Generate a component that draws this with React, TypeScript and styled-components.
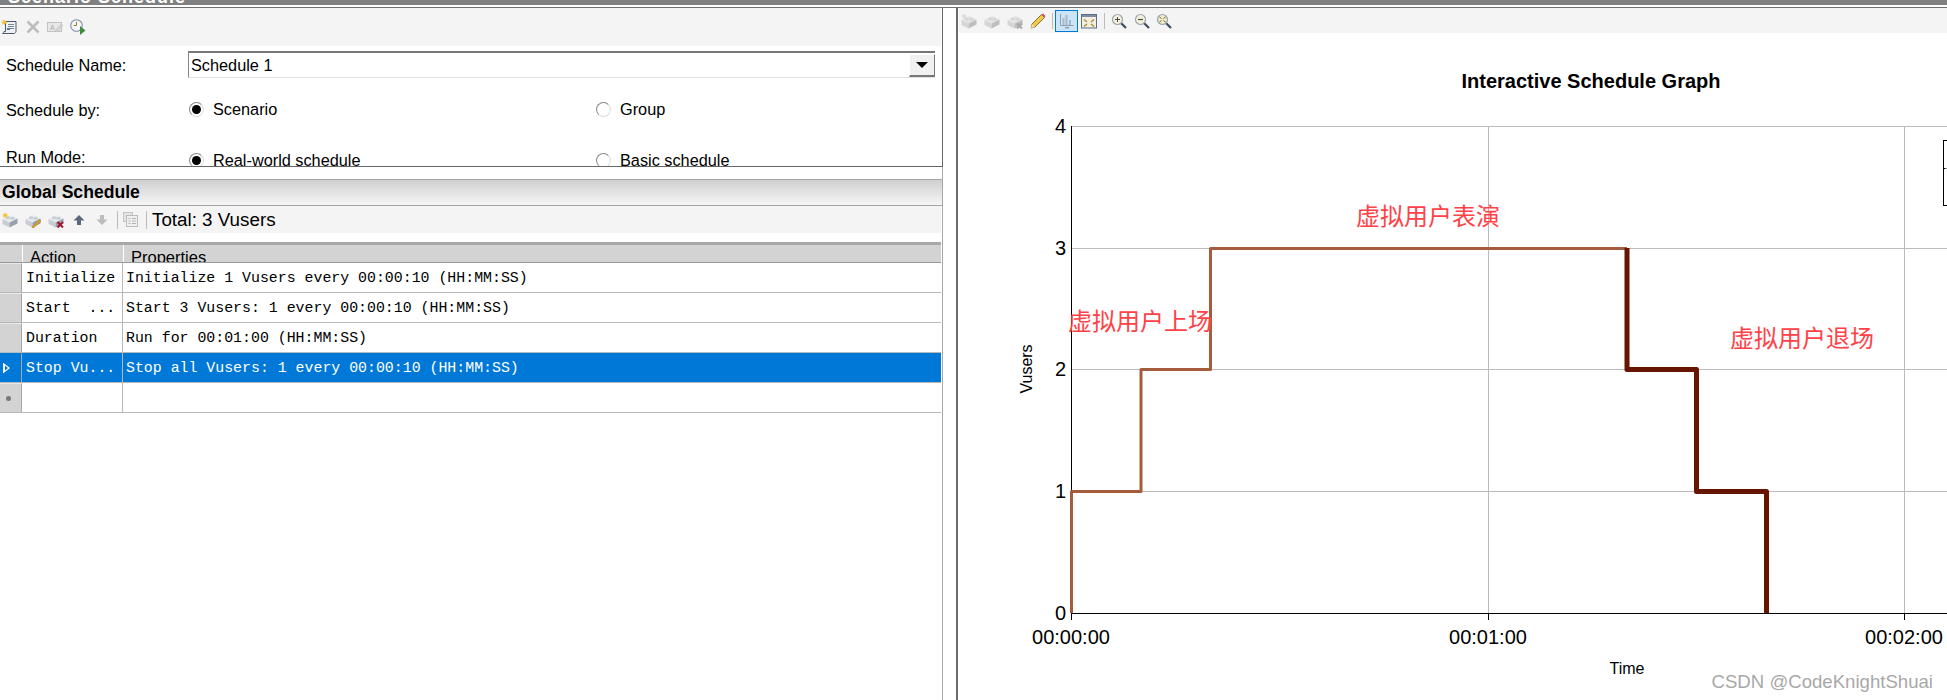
import React from 'react';
import styled, { createGlobalStyle } from 'styled-components';

const GlobalStyle = createGlobalStyle`
  html, body {
    margin: 0;
    padding: 0;
    background: #fff;
    overflow: hidden;
  }
`;

const rows = [
  { action: 'Initialize', props: 'Initialize 1 Vusers every 00:00:10 (HH:MM:SS)' },
  { action: 'Start  ...', props: 'Start 3 Vusers: 1 every 00:00:10 (HH:MM:SS)' },
  { action: 'Duration', props: 'Run for 00:01:00 (HH:MM:SS)' },
  { action: 'Stop Vu...', props: 'Stop all Vusers: 1 every 00:00:10 (HH:MM:SS)', selected: true },
];

const Star = ({ color = '#f2c230' }: { color?: string }) => (
  <path d="M3 0l.8 2 2-.6-1 1.7 1.5 1.3-2.1.1-.3 2-1.2-1.7-1.8.8.6-1.9L0 2.5l2.1-.1z" fill={color} />
);

function Brick({ star, muted, mark }: { star?: boolean; muted?: boolean; mark?: 'pencil' | 'cross' | 'greyCross' }) {
  const top = muted ? '#e4e4e4' : '#e6eaee';
  const left = muted ? '#d6d6d6' : '#c8ced4';
  const right = muted ? '#bebebe' : '#98a2ac';
  return (
    <svg width="16" height="16" viewBox="0 0 16 16">
      <path d="M0.5 7 L8.5 3 L15.5 6.5 L7.5 10.5z" fill={top} />
      <path d="M0.5 7 L7.5 10.5 V15.5 L0.5 12z" fill={left} />
      <path d="M15.5 6.5 L7.5 10.5 V15.5 L15.5 11.5z" fill={right} />
      <ellipse cx="6" cy="5.8" rx="2.2" ry="1.5" fill={left} />
      <ellipse cx="10.6" cy="6.2" rx="2.2" ry="1.5" fill={left} />
      {star && <Star color={muted ? '#dcdcdc' : '#f2c230'} />}
      {mark === 'pencil' && <path d="M15 7.5 L8 14 L7 16 L9.2 15.4 L16 9z" fill="#e8a820" stroke="#8a6a10" strokeWidth=".4" />}
      {mark === 'cross' && <path d="M9.5 10 L15 15.5 M15 10 L9.5 15.5" stroke="#a01830" strokeWidth="2" />}
      {mark === 'greyCross' && <path d="M10 10.5 L15 15.5 M15 10.5 L10 15.5" stroke="#a8a8a8" strokeWidth="2" />}
    </svg>
  );
}

const ScrollIcon = () => (
  <svg width="16" height="16" viewBox="0 0 16 16">
    <path d="M4.5 2.5 H15 V12 C15 13 14.5 14 13.5 14.5 H1.5 C2.5 14 3 13.5 3 12.5 H4.5z" fill="#eef1f4" stroke="#4a5a6c" />
    <path d="M7 5.5h6M7 7.5h6M7 9.5h6" stroke="#7b8a99" />
    <path d="M6 11 h3 v-2 h-3z" fill="#5c7590" />
    <Star />
  </svg>
);

const CrossIcon = () => (
  <svg width="14" height="14" viewBox="0 0 14 14">
    <path d="M1.5 1.5 L12.5 12.5 M12.5 1.5 L1.5 12.5" stroke="#bdbdbd" strokeWidth="2.6" />
  </svg>
);

const RenameIcon = () => (
  <svg width="16" height="16" viewBox="0 0 16 16">
    <rect x="0.5" y="3.5" width="14" height="9" fill="#e8e8e8" stroke="#c2c2c2" />
    <text x="3" y="11" fontFamily="Liberation Sans, sans-serif" fontSize="7" fill="#a8a8a8">A</text>
    <path d="M8 12 L14 5 L16 6.5 L10 13z" fill="#d4d4d4" stroke="#bbb" strokeWidth=".5" />
  </svg>
);

const ClockIcon = () => (
  <svg width="16" height="16" viewBox="0 0 16 16">
    <circle cx="6.5" cy="6.5" r="5.8" fill="#f2f6fa" stroke="#7c8ea0" strokeWidth="1.1" />
    <path d="M6.5 2.8 V6.5 H3.6" fill="none" stroke="#a87a20" strokeWidth="1" />
    <path d="M10 7 L15.5 11.5 L10 16z" fill="#3f8c3a" />
  </svg>
);

const ArrowIcon = ({ down, color }: { down?: boolean; color: string }) => (
  <svg width="12" height="12" viewBox="0 0 12 12">
    <path d={down ? 'M4 1 H8 V5.5 H11.5 L6 11 L.5 5.5 H4z' : 'M6 1 L11.5 6.5 H8 V11 H4 V6.5 H.5z'} fill={color} />
  </svg>
);

const SheetIcon = () => (
  <svg width="15" height="15" viewBox="0 0 15 15">
    <rect x="0.5" y="0.5" width="9" height="9" fill="#e4e4e4" stroke="#c4c4c4" />
    <rect x="3.5" y="3.5" width="11" height="11" fill="#f0f0f0" stroke="#bbb" />
    <path d="M5.5 6.5h2M5.5 9h2M5.5 11.5h2M9 6.5h4M9 9h4M9 11.5h4" stroke="#b4b4b4" />
  </svg>
);

const PencilIcon = () => (
  <svg width="16" height="16" viewBox="0 0 16 16">
    <path d="M1 15 L2 11 L11.5 1.5 L14.5 4.5 L5 14z" fill="#f0c848" stroke="#6a5a28" strokeWidth=".8" />
    <path d="M11.5 1.5 L13 0.5 L15.5 3 L14.5 4.5z" fill="#d0506a" />
    <path d="M1 15 L2 11 L5 14z" fill="#f4e0b0" />
  </svg>
);

const GraphIcon = () => (
  <svg width="16" height="16" viewBox="0 0 16 16">
    <path d="M1.5 1 V12.5 H14.5" fill="none" stroke="#8ea0ae" />
    <path d="M3.5 5h2v7h-2zM6.5 2h2v10h-2zM10 7h2v5h-2z" fill="#a7b8c6" />
    <path d="M6 14h4v1.5H6z" fill="#8ea0ae" />
  </svg>
);

const FitIcon = () => (
  <svg width="16" height="16" viewBox="0 0 16 16">
    <rect x="0.5" y="1.5" width="15" height="13.5" fill="#f2efe2" stroke="#5a6f86" />
    <rect x="1" y="2" width="14" height="2" fill="#7b8fa5" />
    <path d="M3 6.5 L6 9M13 6.5 L10 9M3 13.5 L6 11M13 13.5 L10 11" stroke="#a88c30" strokeWidth="1.4" />
  </svg>
);

const LensIcon = ({ kind }: { kind: 'plus' | 'minus' | 'fit' }) => (
  <svg width="16" height="16" viewBox="0 0 16 16">
    <path d="M10 10 L15 15" stroke="#3c4c60" strokeWidth="2.2" />
    <circle cx="6.5" cy="6.5" r="5" fill={kind === 'fit' ? '#efe9cc' : '#f5f1de'} stroke="#9aa6b0" strokeWidth="1.2" />
    {kind === 'plus' && <path d="M4 6.5h5M6.5 4v5" stroke="#4c4c40" />}
    {kind === 'minus' && <path d="M4 6.5h5" stroke="#4c4c40" strokeWidth="1.2" />}
    {kind === 'fit' && <path d="M3.5 4 L5.5 5.5M9.5 4 L7.5 5.5M3.5 9 L5.5 7.5M9.5 9 L7.5 7.5" stroke="#7a6a28" />}
  </svg>
);

const Page = styled.div`
  width: 1947px;
  height: 700px;
  overflow: hidden;
  display: flex;
  flex-direction: column;
  background: #fff;
  font-family: 'Liberation Sans', Arial, sans-serif;
  color: #000;
`;

const TitleBar = styled.div`
  height: 5px;
  flex: none;
  background: #808080;
  overflow: hidden;
  color: #fff;
  font-weight: bold;
  font-size: 18px;
  letter-spacing: 1px;
  line-height: 18px;
  padding-left: 8px;

  span {
    display: block;
    margin-top: -12px;
  }
`;

const TitleRule = styled.div`
  flex: none;
  height: 1px;
  margin-top: 2px;
  background: #6e6e6e;
`;

const Columns = styled.div`
  flex: 1;
  display: flex;
  min-height: 0;
`;

const LeftColumn = styled.div`
  width: 943px;
  flex: none;
  border-right: 1px solid #a8a8a8;
  box-sizing: border-box;
`;

const RightColumn = styled.div`
  position: relative;
  flex: 1;
  margin-left: 13px;
  border-left: 2px solid #6a6a6a;
  min-width: 0;
  overflow: hidden;
`;

const ScenarioPanel = styled.div`
  height: 159px;
  box-sizing: border-box;
  overflow: hidden;
  margin-right: -1px;
  border-right: 1px solid #666;
  border-bottom: 1px solid #666;
`;

const Toolbar = styled.div<{ $height: number }>`
  height: ${p => p.$height}px;
  display: flex;
  align-items: center;
  background: #f4f4f4;
  box-sizing: border-box;
`;

const ToolSlot = styled.span<{ $width: number }>`
  width: ${p => p.$width}px;
  flex: none;
  display: flex;
  align-items: center;
`;

const ScenarioToolbar = styled(Toolbar)`
  padding-left: 1px;
  margin-right: 1px;
`;

const Form = styled.div`
  display: grid;
  grid-template-columns: 188px 1fr;
  padding-top: 5px;
  font-size: 16.3px;
`;

const FieldLabel = styled.div<{ $top?: number }>`
  padding-left: 6px;
  height: 22px;
  line-height: 22px;
  margin-top: ${p => p.$top ?? 0}px;
  white-space: nowrap;
`;

const Combo = styled.div`
  width: 747px;
  height: 27px;
  box-sizing: border-box;
  display: flex;
  align-items: center;
  justify-content: space-between;
  border-top: 2px solid #777;
  border-left: 1px solid #888;
  border-bottom: 1px solid #e0e0e0;
  padding-left: 2px;
`;

const ComboButton = styled.div`
  width: 26px;
  height: 23px;
  box-sizing: border-box;
  display: flex;
  align-items: center;
  justify-content: center;
  background: #f0f0f0;
  border: 1px solid #fff;
  border-right: 1px solid #777;
  border-bottom: 2px solid #777;
  margin-top: 1px;

  &::after {
    content: '';
    border-left: 6px solid transparent;
    border-right: 6px solid transparent;
    border-top: 6px solid #000;
  }
`;

const RadioRow = styled.div<{ $top: number }>`
  display: grid;
  grid-template-columns: 407px 1fr;
  padding-left: 1px;
  margin-top: ${p => p.$top}px;
  height: 22px;
`;

const RadioItem = styled.div`
  display: flex;
  align-items: center;
  gap: 9px;
  height: 22px;
  line-height: 24px;
`;

const RadioDot = styled.span<{ $on?: boolean }>`
  width: 15px;
  height: 15px;
  flex: none;
  box-sizing: border-box;
  border-radius: 50%;
  border: 1px solid #8a8a8a;
  border-right-color: #ddd;
  border-bottom-color: #ddd;
  background: #fff;
  display: flex;
  align-items: center;
  justify-content: center;

  &::after {
    content: '';
    display: ${p => (p.$on ? 'block' : 'none')};
    width: 9px;
    height: 9px;
    border-radius: 50%;
    background: #000;
  }
`;

const SectionHead = styled.div`
  margin-top: 12px;
  margin-right: -1px;
  height: 27px;
  box-sizing: border-box;
  border-top: 1px solid #a6a6a6;
  border-bottom: 1px solid #a6a6a6;
  border-right: 1px solid #a6a6a6;
  background: linear-gradient(#cfcfcf, #f6f6f6);
  font-weight: bold;
  font-size: 17.6px;
  line-height: 25px;
  padding-left: 2px;
`;

const VuserToolbar = styled(Toolbar)`
  padding-left: 2px;
  margin-right: 1px;
`;

const Divider = styled.span<{ $width: number; $height?: number }>`
  width: 1px;
  height: ${p => p.$height ?? 18}px;
  margin-right: ${p => p.$width - 1}px;
  background: #bcbcbc;
  flex: none;
`;

const TotalText = styled.span`
  font-size: 18.8px;
`;

const Grid = styled.div`
  margin-top: 9px;
  margin-right: 1px;
  border-top: 3px solid #a8a8a8;
`;

const GridHeader = styled.div`
  display: grid;
  grid-template-columns: 22px 101px 1fr;
  height: 17px;
  overflow: hidden;
  background: #d3d3d3;
  font-size: 16.5px;
  line-height: 24px;
  border-bottom: 1px solid #999;

  div + div {
    border-left: 1px solid #fff;
    padding-left: 7px;
  }
`;

const GridRow = styled.div<{ $selected?: boolean }>`
  display: grid;
  grid-template-columns: 22px 101px 1fr;
  height: 30px;
  box-sizing: border-box;
  border-bottom: 1px solid #b8b8b8;
  background: ${p => (p.$selected ? '#0078d7' : '#fff')};
  color: ${p => (p.$selected ? '#fff' : '#000')};
  font-family: 'Liberation Mono', 'DejaVu Sans Mono', monospace;
  font-size: 14.88px;
  line-height: 31px;
  white-space: pre;
`;

const RowHead = styled.div<{ $selected?: boolean }>`
  background: ${p => (p.$selected ? '#0078d7' : '#d3d3d3')};
  border-top: 1px solid ${p => (p.$selected ? '#0078d7' : '#e8e8e8')};
  border-right: 1px solid #a8a8a8;
  display: flex;
  align-items: center;
  padding-left: 3px;
  box-sizing: border-box;
`;

const Cell = styled.div`
  padding-left: 4px;
  border-right: 1px solid #b8b8b8;
  overflow: hidden;

  &:last-child {
    padding-left: 3px;
    border-right: none;
  }
`;

const PlayMark = styled.span`
  width: 7px;
  height: 11px;
  box-sizing: border-box;
  background: #fff;
  clip-path: polygon(0 0, 100% 50%, 0 100%, 0 0, 2px 3px, 2px 8px, 5px 50%, 2px 3px);
`;

const NewRowMark = styled.span`
  width: 5px;
  height: 5px;
  margin-left: 3px;
  border-radius: 50%;
  background: #777;
`;

const ChartToolbar = styled(Toolbar)`
  margin-left: 1px;
  padding-left: 2px;
`;

const ToolButton = styled.span<{ $active?: boolean }>`
  width: 23px;
  height: 22px;
  flex: none;
  box-sizing: border-box;
  display: flex;
  align-items: center;
  justify-content: center;
  background: ${p => (p.$active ? '#cce4f7' : 'transparent')};
  border: 1px solid ${p => (p.$active ? '#0078d7' : 'transparent')};
`;

const ChartSvg = styled.svg`
  display: block;
`;

const Note = styled.div<{ $x: number; $y: number }>`
  position: absolute;
  left: ${p => p.$x}px;
  top: ${p => p.$y}px;
  font-family: 'Noto Sans CJK SC', sans-serif;
  font-size: 24px;
  line-height: 30px;
  color: #ff4248;
  white-space: nowrap;
`;

const Watermark = styled.div`
  position: absolute;
  right: 14px;
  bottom: 7px;
  font-size: 18.6px;
  line-height: 22px;
  color: #a8a8a8;
  text-shadow: 0 0 1px #fff;
  white-space: nowrap;
`;

const yTicks = [
  { label: '4', y: 126 },
  { label: '3', y: 248 },
  { label: '2', y: 369 },
  { label: '1', y: 491 },
  { label: '0', y: 613 },
];
const xTicks = [
  { label: '00:00:00', x: 1071 },
  { label: '00:01:00', x: 1488 },
  { label: '00:02:00', x: 1904 },
];

function ScheduleChart() {
  return (
    <ChartSvg width="989" height="667" viewBox="958 33 989 667">
      <text x="1591" y="88" textAnchor="middle" fontFamily="Liberation Sans, Arial, sans-serif" fontWeight="bold" fontSize="20">
        Interactive Schedule Graph
      </text>
      {yTicks.slice(0, 4).map(t => (
        <line key={t.label} x1="1071" x2="1947" y1={t.y + 0.5} y2={t.y + 0.5} stroke="#bcbcbc" />
      ))}
      {xTicks.slice(1).map(t => (
        <line key={t.label} x1={t.x + 0.5} x2={t.x + 0.5} y1="126" y2="613" stroke="#bcbcbc" />
      ))}
      <line x1="1071.5" x2="1071.5" y1="126" y2="620" stroke="#000" />
      <line x1="1071" x2="1947" y1="613.5" y2="613.5" stroke="#000" />
      {xTicks.slice(1).map(t => (
        <line key={t.label} x1={t.x + 0.5} x2={t.x + 0.5} y1="613" y2="620" stroke="#000" />
      ))}
      <g fontFamily="Liberation Sans, Arial, sans-serif" fontSize="20" fill="#000">
        {yTicks.map(t => (
          <text key={t.label} x="1066" y={t.y + 7} textAnchor="end">
            {t.label}
          </text>
        ))}
        {xTicks.map(t => (
          <text key={t.label} x={t.x} y="644" textAnchor="middle">
            {t.label}
          </text>
        ))}
      </g>
      <g fontFamily="Liberation Sans, Arial, sans-serif" fontSize="16" fill="#000">
        <text x="1627" y="674" textAnchor="middle">
          Time
        </text>
        <text x="0" y="0" textAnchor="middle" transform="translate(1032 369) rotate(-90)">
          Vusers
        </text>
      </g>
      <path
        d="M1071.5 613 V491.5 H1141 V369.5 H1210.5 V248.5 H1627"
        fill="none"
        stroke="#a55c3c"
        strokeWidth="3"
        strokeLinejoin="round"
      />
      <path
        d="M1627 248 V369.5 H1696.5 V491.5 H1766.5 V613"
        fill="none"
        stroke="#661500"
        strokeWidth="5"
        strokeLinejoin="round"
      />
      <rect x="1943.5" y="140.5" width="20" height="65" fill="#fff" stroke="#000" />
      <line x1="1943.5" x2="1947" y1="168.5" y2="168.5" stroke="#000" strokeDasharray="2 1" />
    </ChartSvg>
  );
}

export default function App() {
  return (
    <Page>
      <GlobalStyle />
      <TitleBar>
        <span>Scenario Schedule</span>
      </TitleBar>
      <TitleRule />
      <Columns>
        <LeftColumn>
          <ScenarioPanel>
            <ScenarioToolbar $height={38}>
              <ToolSlot $width={25}><ScrollIcon /></ToolSlot>
              <ToolSlot $width={21}><CrossIcon /></ToolSlot>
              <ToolSlot $width={23}><RenameIcon /></ToolSlot>
              <ToolSlot $width={16}><ClockIcon /></ToolSlot>
            </ScenarioToolbar>
            <Form>
              <FieldLabel $top={3}>Schedule Name:</FieldLabel>
              <Combo>
                Schedule 1
                <ComboButton />
              </Combo>
              <FieldLabel $top={21}>Schedule by:</FieldLabel>
              <RadioRow $top={20}>
                <RadioItem>
                  <RadioDot $on />
                  Scenario
                </RadioItem>
                <RadioItem>
                  <RadioDot />
                  Group
                </RadioItem>
              </RadioRow>
              <FieldLabel $top={25}>Run Mode:</FieldLabel>
              <RadioRow $top={28}>
                <RadioItem>
                  <RadioDot $on />
                  Real-world schedule
                </RadioItem>
                <RadioItem>
                  <RadioDot />
                  Basic schedule
                </RadioItem>
              </RadioRow>
            </Form>
          </ScenarioPanel>
          <SectionHead>Global Schedule</SectionHead>
          <VuserToolbar $height={27}>
            <ToolSlot $width={23}><Brick star /></ToolSlot>
            <ToolSlot $width={23}><Brick mark="pencil" /></ToolSlot>
            <ToolSlot $width={25}><Brick mark="cross" /></ToolSlot>
            <ToolSlot $width={23}><ArrowIcon color="#5a6a7c" /></ToolSlot>
            <ToolSlot $width={21}><ArrowIcon down color="#bcbcbc" /></ToolSlot>
            <Divider $width={6} />
            <ToolSlot $width={23}><SheetIcon /></ToolSlot>
            <Divider $width={6} />
            <TotalText>Total: 3 Vusers</TotalText>
          </VuserToolbar>
          <Grid>
            <GridHeader>
              <div />
              <div>Action</div>
              <div>Properties</div>
            </GridHeader>
            {rows.map(row => (
              <GridRow key={row.action} $selected={row.selected}>
                <RowHead $selected={row.selected}>{row.selected && <PlayMark />}</RowHead>
                <Cell>{row.action}</Cell>
                <Cell>{row.props}</Cell>
              </GridRow>
            ))}
            <GridRow>
              <RowHead>
                <NewRowMark />
              </RowHead>
              <Cell />
              <Cell />
            </GridRow>
          </Grid>
        </LeftColumn>
        <RightColumn>
          <ChartToolbar $height={25}>
            <ToolSlot $width={23}><Brick star muted /></ToolSlot>
            <ToolSlot $width={23}><Brick muted /></ToolSlot>
            <ToolSlot $width={23}><Brick muted mark="greyCross" /></ToolSlot>
            <ToolSlot $width={22}><PencilIcon /></ToolSlot>
            <Divider $width={3} $height={16} />
            <ToolSlot $width={26}>
              <ToolButton $active>
                <GraphIcon />
              </ToolButton>
            </ToolSlot>
            <ToolSlot $width={23}><FitIcon /></ToolSlot>
            <Divider $width={7} $height={16} />
            <ToolSlot $width={23}><LensIcon kind="plus" /></ToolSlot>
            <ToolSlot $width={22}><LensIcon kind="minus" /></ToolSlot>
            <ToolSlot $width={16}><LensIcon kind="fit" /></ToolSlot>
          </ChartToolbar>
          <ScheduleChart />
          <Note $x={398} $y={192}>虚拟用户表演</Note>
          <Note $x={110} $y={297}>虚拟用户上场</Note>
          <Note $x={772} $y={314}>虚拟用户退场</Note>
          <Watermark>CSDN @CodeKnightShuai</Watermark>
        </RightColumn>
      </Columns>
    </Page>
  );
}
